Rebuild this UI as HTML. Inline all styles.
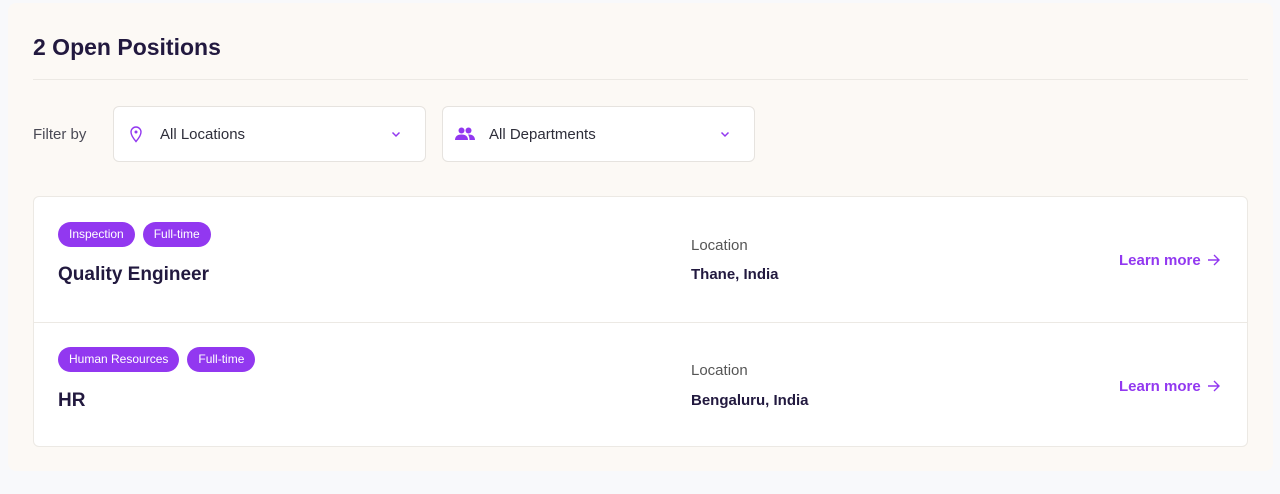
<!DOCTYPE html>
<html><head><style>
*{box-sizing:border-box;margin:0;padding:0}
body{width:1280px;height:494px;background:#f8f9fb;font-family:"Liberation Sans",sans-serif;color:#1f1937;position:relative;overflow:hidden}
.wrap{position:absolute;left:8px;top:3px;width:1265px;height:468px;background:#fcf9f5;border-radius:8px}
h1{position:absolute;left:33px;top:34px;font-size:23px;font-weight:700;color:#22193f}
.hr{position:absolute;left:33px;top:79px;width:1215px;height:1px;background:#ece9e4}
.fl{position:absolute;left:33px;top:126px;font-size:15px;color:#4a4a55}
.sel{position:absolute;top:106px;height:56px;background:#fff;border:1px solid #e6e3df;border-radius:6px;font-size:15px;color:#2e2e3a}
.sel span{position:absolute;left:46px;top:19px}
.sel svg{position:absolute}
.card{position:absolute;left:33px;top:196px;width:1215px;height:251px;background:#fff;border:1px solid #ece9e4;border-radius:6px}
.div{position:absolute;left:0;top:125px;width:100%;height:1px;background:#ece9e4}
.tags{position:absolute;left:24px;display:flex;gap:8px}
.tag{height:25px;line-height:25px;padding:0 11px;background:#9238f0;color:#fff;font-size:12px;border-radius:13px;white-space:nowrap}
.t{position:absolute;left:24px;font-size:19px;font-weight:700;color:#22193f}
.ll{position:absolute;left:657px;font-size:15px;color:#555}
.lv{position:absolute;left:657px;font-size:15px;font-weight:700;color:#22193f}
.lm{position:absolute;left:1085px;font-size:15px;font-weight:700;color:#9238f0}
.lm svg{vertical-align:-1px;margin-left:6px}
</style></head><body>
<div class="wrap"></div>
<h1>2 Open Positions</h1>
<div class="hr"></div>
<div class="fl">Filter by</div>
<div class="sel" style="left:113px;width:313px">
<svg style="left:15px;top:18px" width="14" height="18" viewBox="0 0 14 18"><path d="M7 16.5C4 13 2 10 2 7a5 5 0 0 1 10 0c0 3-2 6-5 9.5z" fill="none" stroke="#9238f0" stroke-width="1.4"/><circle cx="7" cy="7" r="1.5" fill="#9238f0"/></svg>
<span>All Locations</span>
<svg style="left:277px;top:24px" width="10" height="7" viewBox="0 0 10 7"><path d="M1.5 1.5L5 5l3.5-3.5" fill="none" stroke="#9238f0" stroke-width="1.5"/></svg>
</div>
<div class="sel" style="left:442px;width:313px">
<svg style="left:12px;top:20px" width="20" height="14" viewBox="0 0 20 14"><circle cx="6.5" cy="3.5" r="3" fill="#9238f0"/><circle cx="13.5" cy="3.5" r="3" fill="#9238f0"/><path d="M0 13c0-4 3-5.5 6.5-5.5S13 9 13 13z" fill="#9238f0"/><path d="M14 7.5c3 0 6 1.5 6 5.5h-5.5c0-2-.5-4-1.5-5.5z" fill="#9238f0"/></svg>
<span>All Departments</span>
<svg style="left:277px;top:24px" width="10" height="7" viewBox="0 0 10 7"><path d="M1.5 1.5L5 5l3.5-3.5" fill="none" stroke="#9238f0" stroke-width="1.5"/></svg>
</div>
<div class="card">
<div class="tags" style="top:25px"><div class="tag">Inspection</div><div class="tag">Full-time</div></div>
<div class="t" style="top:67px">Quality Engineer</div>
<div class="ll" style="top:40px">Location</div>
<div class="lv" style="top:69px">Thane, India</div>
<div class="lm" style="top:55px">Learn more<svg width="13" height="12" viewBox="0 0 13 12"><path d="M1 6h11M7 1l5 5-5 5" fill="none" stroke="#9238f0" stroke-width="1.4"/></svg></div>
<div class="div"></div>
<div class="tags" style="top:150px"><div class="tag">Human Resources</div><div class="tag">Full-time</div></div>
<div class="t" style="top:193px">HR</div>
<div class="ll" style="top:165px">Location</div>
<div class="lv" style="top:195px">Bengaluru, India</div>
<div class="lm" style="top:181px">Learn more<svg width="13" height="12" viewBox="0 0 13 12"><path d="M1 6h11M7 1l5 5-5 5" fill="none" stroke="#9238f0" stroke-width="1.4"/></svg></div>
</div>
</body></html>
